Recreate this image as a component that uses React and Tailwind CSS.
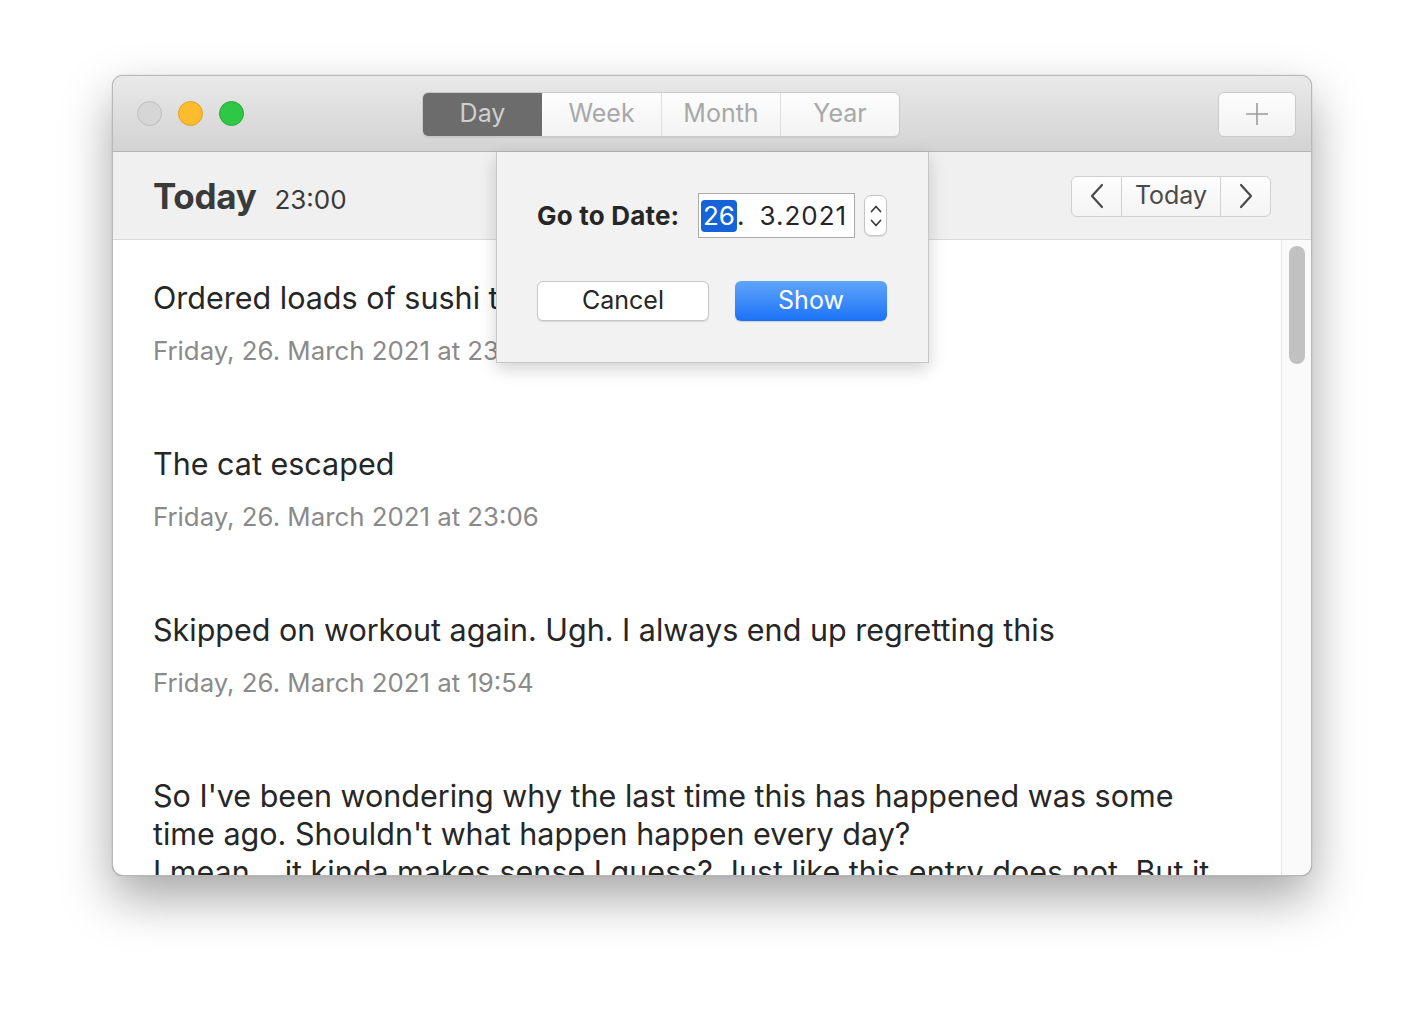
import { useState } from 'react';

const font = { fontFamily: 'Inter, "Noto Sans", sans-serif' };

const entries = [
  { text: 'Ordered loads of sushi tonight', date: 'Friday, 26. March 2021 at 23:41' },
  { text: 'The cat escaped', date: 'Friday, 26. March 2021 at 23:06' },
  { text: 'Skipped on workout again. Ugh. I always end up regretting this', date: 'Friday, 26. March 2021 at 19:54' },
  {
    text: "So I've been wondering why the last time this has happened was some time ago. Shouldn't what happen happen every day?\nI mean... it kinda makes sense I guess? Just like this entry does not. But it still is an entry.",
    date: 'Friday, 26. March 2021 at 18:12',
  },
];

function Chevron({ dir }) {
  return (
    <svg width="16" height="28" viewBox="0 0 16 28" fill="none" stroke="#4a4a4a" strokeWidth="2.2" strokeLinecap="round" strokeLinejoin="round">
      {dir === 'left' ? <path d="M13 3 L3 14 L13 25" /> : <path d="M3 3 L13 14 L3 25" />}
    </svg>
  );
}

function Segmented() {
  const [active, setActive] = useState('Day');
  const items = ['Day', 'Week', 'Month', 'Year'];
  return (
    <div className="flex h-[45px] rounded-[6px] overflow-hidden border border-[#c9c9c9] bg-gradient-to-b from-[#fdfdfd] to-[#f3f3f3] shadow-[0_1px_0_rgba(0,0,0,0.06)]">
      {items.map((it, i) => (
        <button
          key={it}
          type="button"
          onClick={() => setActive(it)}
          className={`w-[119px] h-full flex items-center justify-center text-[25px] ${
            active === it ? 'bg-[#6c6c6c] text-[#cfcfcf]' : 'text-[#a8a8a8]'
          } ${i > 0 && active !== it && active !== items[i - 1] ? 'border-l border-[#dedede]' : ''}`}
        >
          {it}
        </button>
      ))}
    </div>
  );
}

export default function App() {
  return (
    <div className="w-[1424px] h-[1024px] bg-white pl-[112px] pt-[75px]" style={font}>
      <div className="relative w-[1200px] h-[801px] rounded-[11px] overflow-hidden border border-[#b8b8b8] shadow-[0_22px_50px_rgba(0,0,0,0.35),0_0_1px_rgba(0,0,0,0.4)] flex flex-col bg-white">
        {/* title bar */}
        <div className="h-[76px] shrink-0 flex items-center bg-gradient-to-b from-[#e9e9e9] to-[#d3d3d3] border-b border-[#b5b5b5]">
          <div className="flex gap-[16px] pl-[24px]">
            <span className="w-[25px] h-[25px] rounded-full bg-[#d6d6d6] border border-[#bdbdbd]" />
            <span className="w-[25px] h-[25px] rounded-full bg-[#febc2e] border border-[#e0a125]" />
            <span className="w-[25px] h-[25px] rounded-full bg-[#2fc746] border border-[#24a93a]" />
          </div>
          <div className="ml-[178px] mt-[1px]">
            <Segmented />
          </div>
          <div className="flex-1" />
          <button type="button" className="mr-[15px] mt-[1px] w-[78px] h-[45px] rounded-[6px] border border-[#c9c9c9] bg-gradient-to-b from-[#fdfdfd] to-[#f2f2f2] flex items-center justify-center">
            <svg width="24" height="24" viewBox="0 0 24 24" stroke="#9b9b9b" strokeWidth="1.6">
              <path d="M12 1 V23 M1 12 H23" />
            </svg>
          </button>
        </div>

        {/* header */}
        <div className="h-[88px] shrink-0 flex items-center px-[40px] bg-[#f0f0f0] border-b border-[#dadada]">
          <div className="flex items-baseline mt-[2px]">
            <span className="text-[35px] font-bold text-[#3a3a3a] tracking-[-0.3px]">Today</span>
            <span className="ml-[18px] text-[26px] text-[#3a3a3a]">23:00</span>
          </div>
          <div className="flex-1" />
          <div className="flex h-[41px] mt-[1px]">
            <button type="button" className="w-[51px] h-full rounded-l-[6px] border border-[#d0d0d0] bg-gradient-to-b from-[#fdfdfd] to-[#f4f4f4] flex items-center justify-center">
              <Chevron dir="left" />
            </button>
            <button type="button" className="w-[98px] h-full border-y border-[#d0d0d0] bg-gradient-to-b from-[#fdfdfd] to-[#f4f4f4] text-[25px] text-[#4a4a4a] flex items-center justify-center">
              Today
            </button>
            <button type="button" className="w-[51px] h-full rounded-r-[6px] border border-[#d0d0d0] bg-gradient-to-b from-[#fdfdfd] to-[#f4f4f4] flex items-center justify-center">
              <Chevron dir="right" />
            </button>
          </div>
        </div>

        {/* content */}
        <div className="flex-1 flex min-h-0">
          <div className="flex-1 overflow-hidden pl-[40px] pr-[60px] pt-[39px]">
            {entries.map((e) => (
              <div key={e.date} className="mb-[78px]">
                <p className="text-[30.5px] leading-[38px] text-[#262626] whitespace-pre-line">{e.text}</p>
                <p className="mt-[18px] text-[25.8px] leading-[32px] text-[#8a8a8a]">{e.date}</p>
              </div>
            ))}
          </div>
          <div className="w-[30px] shrink-0 bg-[#fafafa] border-l border-[#e6e6e6] flex justify-center pt-[6px]">
            <div className="w-[16px] h-[118px] rounded-full bg-[#c1c1c1]" />
          </div>
        </div>

        {/* go to date popover */}
        <div className="absolute left-[383px] top-[76px] w-[433px] h-[211px] bg-[#f2f2f2] border border-[#c6c6c6] border-t-0 shadow-[0_6px_16px_rgba(0,0,0,0.18)] pl-[40px] pt-[41px]">
          <div className="flex items-center h-[45px]">
            <span className="w-[161px] text-[26px] font-bold text-[#262626] tracking-[0.2px]">Go to Date:</span>
            <div className="w-[157px] h-[45px] bg-white border border-[#ababab] flex items-center pl-[2px] text-[26px] text-[#262626]">
              <span className="bg-[#1663d9] text-white rounded-[4px] h-[32px] leading-[32px] px-[2px]">26</span>
              <span>.</span>
              <span className="ml-[15px] tracking-[1px]">3.2021</span>
            </div>
            <div className="ml-[9px] w-[23px] h-[41px] rounded-[7px] bg-white border border-[#c4c4c4] shadow-[0_1px_1px_rgba(0,0,0,0.1)] flex flex-col items-center justify-center gap-[6px]">
              <svg width="12" height="8" viewBox="0 0 12 8" fill="none" stroke="#3a3a3a" strokeWidth="1.7" strokeLinecap="round" strokeLinejoin="round"><path d="M1.5 6.5 L6 1.5 L10.5 6.5" /></svg>
              <svg width="12" height="8" viewBox="0 0 12 8" fill="none" stroke="#3a3a3a" strokeWidth="1.7" strokeLinecap="round" strokeLinejoin="round"><path d="M1.5 1.5 L6 6.5 L10.5 1.5" /></svg>
            </div>
          </div>
          <div className="flex gap-[26px] mt-[43px]">
            <button type="button" className="w-[172px] h-[40px] rounded-[6px] bg-white border border-[#c8c8c8] shadow-[0_1px_1px_rgba(0,0,0,0.12)] text-[25px] text-[#262626]">
              Cancel
            </button>
            <button type="button" className="w-[152px] h-[40px] rounded-[6px] bg-gradient-to-b from-[#5ea4fa] to-[#1a71f7] text-[25px] text-white shadow-[0_1px_1px_rgba(0,0,0,0.15)]">
              Show
            </button>
          </div>
        </div>
      </div>
    </div>
  );
}
